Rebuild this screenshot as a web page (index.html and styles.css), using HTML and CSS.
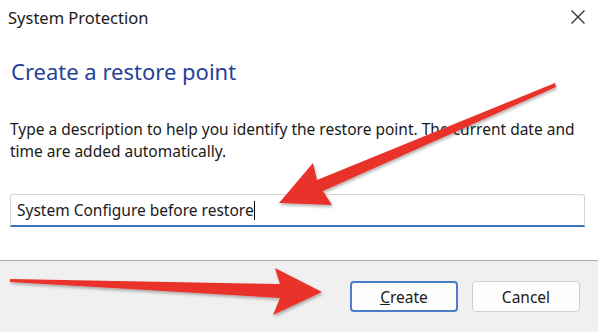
FILE: index.html
```html
<!DOCTYPE html>
<html lang="en">
<head>
    <meta charset="UTF-8">
    <meta name="viewport" content="width=device-width, initial-scale=1.0">
    <title>System Protection</title>
    <link rel="stylesheet" href="styles.css">
</head>
<body>
    <div class="dialog">
        <div class="titlebar">
            <span class="title">System Protection</span>
            <svg class="close" width="16" height="16" viewBox="0 0 16 16">
                <path d="M1.5 1.5 L14.5 14.5 M14.5 1.5 L1.5 14.5" stroke="#333" stroke-width="1.4" fill="none"/>
            </svg>
        </div>

        <div class="content">
            <h1>Create a restore point</h1>
            <p>Type a description to help you identify the restore point. The current date and time are added automatically.</p>
            <div class="field">
                <span class="field-text">System Configure before restore</span><span class="caret"></span>
            </div>
        </div>

        <div class="footer">
            <button class="button primary"><u>C</u>reate</button>
            <button class="button">Cancel</button>
        </div>
    </div>

    <!-- Annotation arrows drawn over the dialog -->
    <svg class="arrows" width="598" height="332" viewBox="0 0 598 332">
        <defs>
            <filter id="shadow" x="-10%" y="-10%" width="120%" height="130%">
                <feDropShadow dx="1" dy="2" stdDeviation="1.5" flood-color="#000" flood-opacity="0.3"/>
            </filter>
        </defs>
        <polygon filter="url(#shadow)" fill="#e8322a"
                 points="279,203 313,163 317,180 555,83 556,87 323,191 332,205"/>
        <polygon filter="url(#shadow)" fill="#e8322a"
                 points="322,292 275,268 280,284 10,279 10,282 280,298 273,315"/>
    </svg>
</body>
</html>
```

FILE: styles.css
```css
body {
    margin: 0;
    background-color: #fff;
    font-family: 'Noto Sans', 'Open Sans', sans-serif;
    color: #1a1a1a;
    width: 598px;
    height: 332px;
    overflow: hidden;
    position: relative;
}
.dialog {
    display: flex;
    flex-direction: column;
    height: 332px;
}
.titlebar {
    display: flex;
    justify-content: space-between;
    align-items: center;
    height: 36px;
    padding: 0 12px 0 8px;
}
.title {
    font-size: 16.5px;
    margin-top: -1px;
}
.close {
    margin-top: -2px;
}
.content {
    flex: 1;
    padding: 0 13px 0 10px;
}
h1 {
    font-size: 22px;
    font-weight: normal;
    color: #26419a;
    margin: 20px 0 0 1px;
}
p {
    font-size: 15.5px;
    line-height: 22px;
    margin: 32px 0 0;
}
.field {
    display: flex;
    align-items: center;
    height: 30px;
    margin-top: 32px;
    padding-left: 6px;
    border: 1px solid #d4d4d4;
    border-bottom: 2px solid #3b73c4;
    border-radius: 3px 3px 0 0;
    font-size: 15.5px;
}
.caret {
    display: inline-block;
    width: 1px;
    height: 19px;
    background-color: #000;
}
.footer {
    height: 72px;
    border-top: 1px solid #acacac;
    background-color: #f0f0f0;
    display: flex;
    justify-content: flex-end;
    align-items: flex-start;
    gap: 14px;
    padding: 20px 18px 0 0;
    box-sizing: border-box;
}
.button {
    width: 108px;
    height: 31px;
    font-family: inherit;
    font-size: 15.5px;
    color: #1a1a1a;
    background-color: #fdfdfd;
    border: 1px solid #cfcfcf;
    border-radius: 4px;
}
.button.primary {
    border: 2px solid #4a7cc8;
}
.arrows {
    position: absolute;
    top: 0;
    left: 0;
    pointer-events: none;
}
```
